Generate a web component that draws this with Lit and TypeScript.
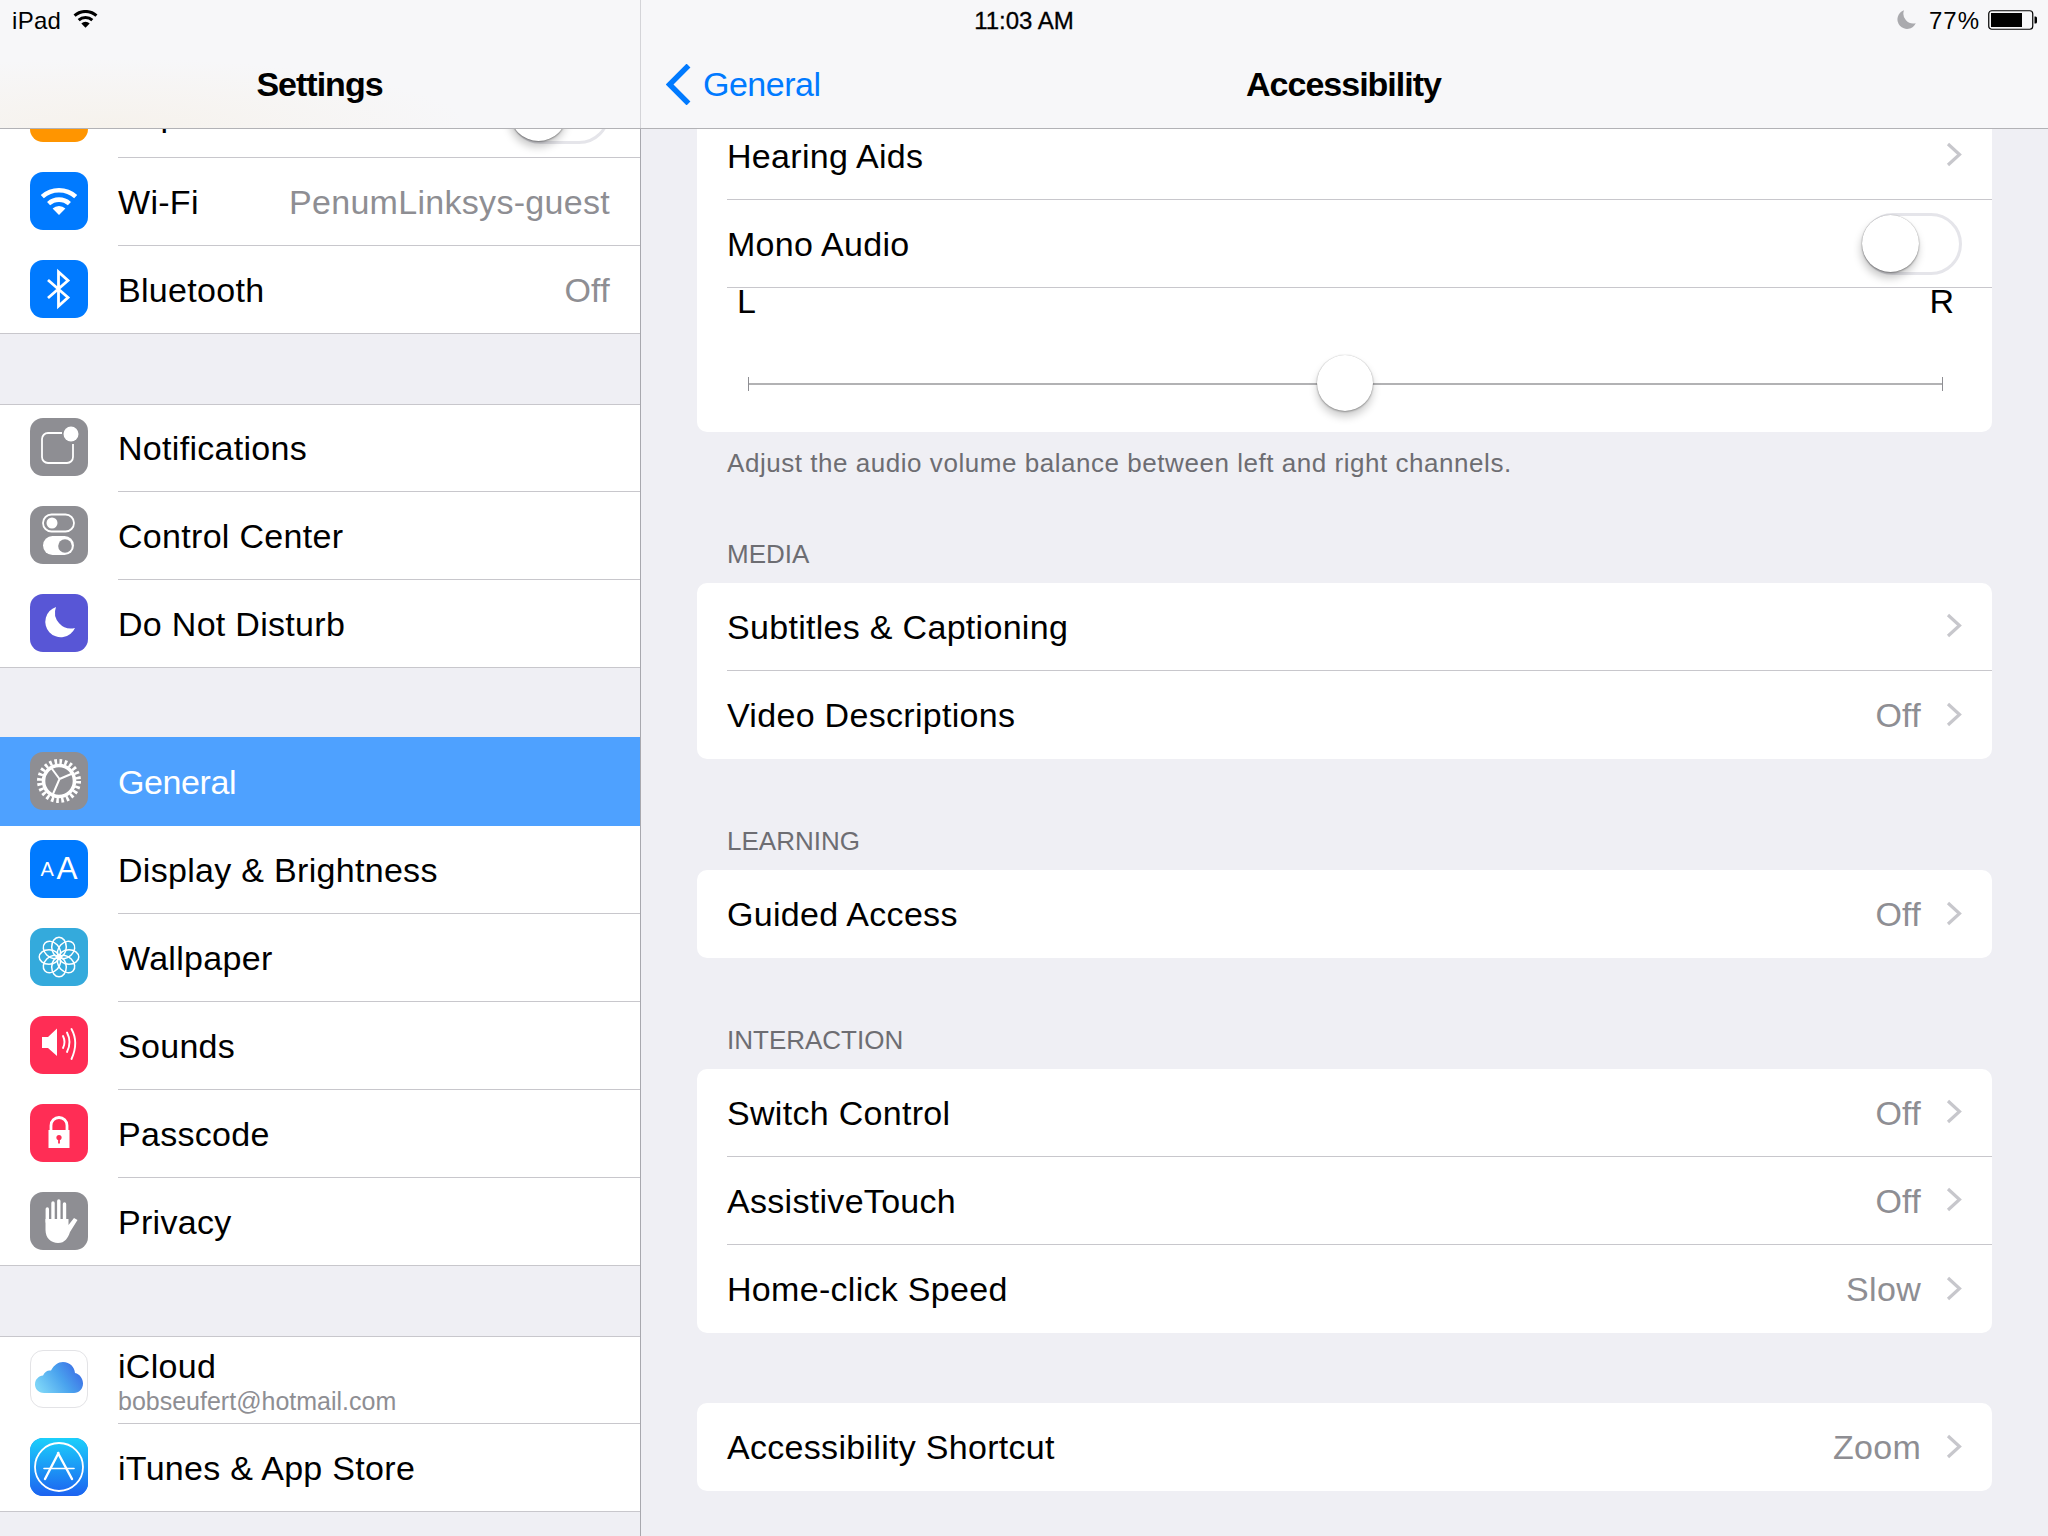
import { LitElement, html, css, svg } from "lit";
import { customElement } from "lit/decorators.js";

const W = "#fff";
const wifi = (c: string) =>
  svg`<g fill="none" stroke="${c}" stroke-width="4.6"><path d="M12.3 24.6A25 25 0 0 1 45.7 24.6"/><path d="M18.6 31.6A15.5 15.5 0 0 1 39.4 31.6"/></g><path fill="${c}" d="M29 43L22.6 36.6A9 9 0 0 1 35.4 36.6Z"/>`;
const moon = (c: string) => svg`<path fill="${c}" d="M26 13A15.5 15.5 0 1 0 45 34A16 16 0 0 1 26 13Z"/>`;

const icons: Record<string, any> = {
  plane: svg``,
  wifi: wifi(W),
  bt: svg`<path fill="none" stroke="${W}" stroke-width="2.8" d="M18 20L38 37.5L28.5 46V12L38 20.5L18 38"/>`,
  notif: svg`<path fill="none" stroke="${W}" stroke-width="1.8" d="M32 15H18a6 6 0 0 0-6 6V39a6 6 0 0 0 6 6H37a6 6 0 0 0 6-6V26"/><circle cx="41" cy="16" r="7.5" fill="${W}"/>`,
  cc: svg`<rect x="13" y="8.5" width="31" height="17" rx="8.5" fill="none" stroke="${W}" stroke-width="1.8"/><circle cx="22" cy="17" r="5.5" fill="${W}"/><rect x="13" y="30" width="31" height="19" rx="9.5" fill="${W}"/><circle cx="35" cy="40" r="6.8" fill="#8e8e93"/>`,
  moon: moon(W),
  gear: svg`<g fill="none" stroke="${W}"><circle cx="29" cy="29" r="19.5" stroke-width="5" stroke-dasharray="2.6 2.5"/><circle cx="29" cy="29" r="15.5" stroke-width="3.6"/><path stroke-width="2" d="M29.5 27L21 15.5M29.5 27L43.5 21M29.5 27L23 42"/></g>`,
  aa: svg`<g fill="${W}" font-family="Liberation Sans, Arial, sans-serif"><text x="10.5" y="36" font-size="20">A</text><text x="26.5" y="39" font-size="31.5">A</text></g>`,
  flower: svg`<g fill="none" stroke="${W}" stroke-width="1.5">${[0, 45, 90, 135, 180, 225, 270, 315].map(
    (a) => svg`<ellipse cx="29" cy="19" rx="7.3" ry="9.8" transform="rotate(${a} 29 29)"/>`
  )}</g><circle cx="29" cy="29" r="3" fill="${W}"/>`,
  sound: svg`<path fill="${W}" d="M12 21H18L27 12.5V40L18 32H12Z"/><g fill="none" stroke="${W}" stroke-width="1.9" stroke-linecap="round"><path d="M33 20Q36 26 33 32"/><path d="M37 16.5Q42 26 37 36"/><path d="M41.5 13Q49 26.5 41.5 43"/></g>`,
  lock: svg`<path fill="none" stroke="${W}" stroke-width="2.8" d="M21 27V21.5a8 8 0 0 1 16 0V27"/><rect x="18.5" y="26" width="21" height="18" fill="${W}"/><circle cx="29" cy="33.5" r="2.6" fill="#ff2d55"/><rect x="28.1" y="33.5" width="1.8" height="6" fill="#ff2d55"/>`,
  hand: svg`<path fill="${W}" d="M15.5 27V38C15.5 46 21 51 28 51C35 51 38 46 40 40L47.5 28L44 26L38.5 33V27Z"/><g stroke="${W}" stroke-width="3.4" stroke-linecap="round"><path d="M17.3 17V30M23 11V30M28.8 9V30M34.5 12V32"/></g>`,
  cloud: svg`<defs><linearGradient id="cl" x1="0.05" y1="0.75" x2="0.95" y2="0.35"><stop offset="0" stop-color="#7bd3f7"/><stop offset="0.55" stop-color="#4aa3ee"/><stop offset="1" stop-color="#3d72e6"/></linearGradient></defs><path fill="url(#cl)" d="M14 43C8 43 5 38.5 5 34.5C5 29 9 26 13 25.5C15 21 18 20 21 20.5C24 15 28 12 33 12C40 12 44.5 17 45 23C50 24 53 29 53 33.5C53 39 49 43 44 43Z"/>`,
  store: svg`<defs><linearGradient id="st" x1="0" y1="0" x2="0" y2="1"><stop offset="0" stop-color="#1bd0fb"/><stop offset="1" stop-color="#1d62f0"/></linearGradient></defs><rect width="58" height="58" fill="url(#st)"/><circle cx="29" cy="29" r="24" fill="none" stroke="${W}" stroke-width="1.8"/><g fill="none" stroke="${W}" stroke-linecap="round"><path stroke-width="2.4" d="M15 41L28.5 15M42 41L28 15"/><path stroke-width="1.6" d="M14 30.5H44"/></g>`,
};

type Item = { label: string; icon: string; bg: string; value?: string; sub?: string; sel?: boolean; toggle?: boolean };

const groups: Item[][] = [
  [
    { label: "Airplane Mode", icon: "plane", bg: "#ff9500", toggle: true },
    { label: "Wi-Fi", icon: "wifi", bg: "#007aff", value: "PenumLinksys-guest" },
    { label: "Bluetooth", icon: "bt", bg: "#007aff", value: "Off" },
  ],
  [
    { label: "Notifications", icon: "notif", bg: "#8e8e93" },
    { label: "Control Center", icon: "cc", bg: "#8e8e93" },
    { label: "Do Not Disturb", icon: "moon", bg: "#5856d6" },
  ],
  [
    { label: "General", icon: "gear", bg: "#8e8e93", sel: true },
    { label: "Display & Brightness", icon: "aa", bg: "#007aff" },
    { label: "Wallpaper", icon: "flower", bg: "#34aadc" },
    { label: "Sounds", icon: "sound", bg: "#ff2d55" },
    { label: "Passcode", icon: "lock", bg: "#ff2d55" },
    { label: "Privacy", icon: "hand", bg: "#8e8e93" },
  ],
  [
    { label: "iCloud", icon: "cloud", bg: "#fff", sub: "bobseufert@hotmail.com" },
    { label: "iTunes & App Store", icon: "store", bg: "#1d8cf5" },
  ],
];

type Sec = { head?: string; rows: { label: string; value?: string }[] };
const sections: Sec[] = [
  { head: "MEDIA", rows: [{ label: "Subtitles & Captioning" }, { label: "Video Descriptions", value: "Off" }] },
  { head: "LEARNING", rows: [{ label: "Guided Access", value: "Off" }] },
  {
    head: "INTERACTION",
    rows: [
      { label: "Switch Control", value: "Off" },
      { label: "AssistiveTouch", value: "Off" },
      { label: "Home-click Speed", value: "Slow" },
    ],
  },
  { rows: [{ label: "Accessibility Shortcut", value: "Zoom" }] },
];

@customElement("app-root")
export class AppRoot extends LitElement {
  static styles = css`
    :host {
      display: block;
      width: 2048px;
      height: 1536px;
      overflow: hidden;
      font-family: "Liberation Sans", Arial, sans-serif;
      font-size: 34px;
      color: #000;
      background: #efeff4;
    }
    .app { display: flex; flex-direction: column; height: 1536px; }
    .header {
      position: relative;
      z-index: 2;
      flex: none;
      height: 129px;
      box-sizing: border-box;
      border-bottom: 1px solid #b2b2b6;
      background:
        linear-gradient(#d4d4d8, #d4d4d8) 640px 0 / 1px 100% no-repeat,
        radial-gradient(360px 70px at 110px 128px, #f6f2ec, rgba(246, 242, 236, 0)),
        #f7f7f9;
    }
    .status {
      display: grid;
      grid-template-columns: 1fr auto 1fr;
      align-items: center;
      height: 40px;
      box-sizing: border-box;
      padding-top: 1px;
      font-size: 24px;
    }
    .st-l { display: flex; align-items: center; gap: 12px; padding-left: 12px; letter-spacing: 0.3px; }
    .st-r { display: flex; align-items: center; justify-content: flex-end; gap: 8px; padding-right: 10px; }
    .time { -webkit-text-stroke: 0.3px #000; }
    .pct { letter-spacing: 1px; margin-left: 4px; }
    .st-wifi { width: 25px; height: 19px; display: block; margin-top: -2px; }
    .st-moon { width: 21px; height: 21px; display: block; margin-top: -2px; }
    .batt { width: 50px; height: 20px; display: block; margin-top: -1px; }
    .nav { display: grid; grid-template-columns: 641px 1fr; height: 88px; }
    .title { font-weight: 700; letter-spacing: -1px; text-align: center; line-height: 88px; padding-right: 2px; }
    .nav-r { display: grid; grid-template-columns: 1fr auto 1fr; align-items: center; height: 88px; }
    .back { display: flex; align-items: center; gap: 12px; padding-left: 25px; color: #007aff; letter-spacing: -0.5px; }
    .back svg { width: 25px; height: 41px; display: block; }
    .main { flex: 1; display: grid; grid-template-columns: 641px 1fr; min-height: 0; }
    .side { overflow: hidden; border-right: 1px solid #a8a8ae; box-sizing: border-box; letter-spacing: 0.3px; }
    .side-list { margin-top: -59px; display: flex; flex-direction: column; gap: 70px; }
    .group { box-shadow: inset 0 1px 0 #c8c7cc; }
    .row {
      display: flex;
      height: 88px;
      box-sizing: border-box;
      background: #fff;
    }
    .group .row:first-child { box-shadow: inset 0 1px 0 #c8c7cc; }
    .group.first .row:first-child { box-shadow: none; }
    .row:last-child { border-bottom: 1px solid #c8c7cc; }
    .row.sel {
      background: #4ea1ff;
      color: #fff;
      letter-spacing: -0.4px;
      box-shadow: 0 -1px 0 #4ea1ff !important;
    }
    .row.sel .body { border-bottom-color: transparent; }
    .icon {
      flex: none;
      width: 58px;
      height: 58px;
      margin: 14px 0 0 30px;
      border-radius: 13px;
      overflow: hidden;
    }
    .icon svg { display: block; width: 58px; height: 58px; }
    .icon.cloud { box-sizing: border-box; border: 1px solid #e3e3e6; }
    .icon.cloud svg { margin: -1px; }
    .body {
      flex: 1;
      min-width: 0;
      margin-left: 30px;
      padding-right: 30px;
      display: flex;
      align-items: center;
      justify-content: space-between;
      box-sizing: border-box;
      height: 88px;
      border-bottom: 1px solid #c8c7cc;
    }
    .row:last-child .body { border-bottom: none; height: 87px; }
    .t { padding-top: 2px; }
    .value { color: #8e8e93; }
    .stack { display: flex; flex-direction: column; align-self: flex-start; padding-top: 11px; }
    .stack .l1 { line-height: 40px; margin-top: -1px; }
    .stack .l2 { font-size: 25px; line-height: 31px; letter-spacing: 0; color: #8e8e93; }
    .switch {
      position: relative;
      flex: none;
      width: 100px;
      height: 62px;
      box-sizing: border-box;
      border: 3px solid #e5e5ea;
      border-radius: 31px;
      background: #fff;
    }
    .switch.inset { margin-right: 0; margin-top: -2px; }
    .knob {
      position: absolute;
      left: -3px;
      top: -1px;
      width: 57px;
      height: 57px;
      border-radius: 50%;
      background: #fff;
      box-shadow: -1px 6px 9px rgba(0, 0, 0, 0.22), 0 1px 2px rgba(0, 0, 0, 0.35), 0 0 1px rgba(0, 0, 0, 0.3);
    }
    .pane { overflow: hidden; padding: 0 56px 0 56px; letter-spacing: 0.3px; }
    .card { background: #fff; border-radius: 10px; overflow: hidden; }
    .card.top { margin-top: -17px; border-radius: 0 0 10px 10px; overflow: visible; }
    .rrow {
      display: flex;
      align-items: center;
      justify-content: space-between;
      height: 88px;
      box-sizing: border-box;
      margin-left: 30px;
      padding-right: 30px;
      border-bottom: 1px solid #c8c7cc;
    }
    .card > .rrow:last-child { border-bottom: none; }
    .card > .rrow:last-child .t { padding-top: 0; }
    .rval { display: flex; align-items: center; gap: 25px; }
    .chev { width: 16px; height: 25px; display: block; margin-top: -2px; }
    .balance { height: 144px; box-sizing: border-box; letter-spacing: 0; }
    .lr {
      display: flex;
      justify-content: space-between;
      line-height: 26px;
      padding: 0 38px 0 40px;
    }
    .slider {
      position: relative;
      height: 14px;
      margin: 63px 49px 0 51px;
      border-left: 1px solid #8e8e93;
      border-right: 1px solid #8e8e93;
    }
    .slider::before {
      content: "";
      position: absolute;
      left: 0;
      right: 0;
      top: 6px;
      height: 2px;
      background: #b2b2b4;
    }
    .thumb {
      position: absolute;
      left: 50%;
      top: -22px;
      width: 56px;
      height: 56px;
      margin-left: -29px;
      border-radius: 50%;
      background: #fff;
      box-shadow: 0 6px 9px rgba(0, 0, 0, 0.2), 0 1px 2px rgba(0, 0, 0, 0.3), 0 0 1px rgba(0, 0, 0, 0.25);
    }
    .foot { padding: 16px 30px 0; font-size: 26px; line-height: 30px; letter-spacing: 0.54px; color: #6d6d72; }
    .sech { padding: 67px 30px 14px; font-size: 26px; line-height: 30px; letter-spacing: 0; color: #6d6d72; }
    .sech.after { padding-top: 61px; }
    .gap { height: 70px; }
  `;

  private chev() {
    return html`<svg class="chev" viewBox="0 0 16 25"><path fill="none" stroke="#c7c7cc" stroke-width="3.2" d="M2 2L13.5 12.5L2 23"/></svg>`;
  }

  private sideRow(it: Item) {
    return html`<div class="row ${it.sel ? "sel" : ""}">
      <div class="icon ${it.icon === "cloud" ? "cloud" : ""}" style="background:${it.bg}">
        <svg viewBox="0 0 58 58">${icons[it.icon]}</svg>
      </div>
      <div class="body">
        ${it.sub
          ? html`<div class="stack"><span class="l1">${it.label}</span><span class="l2">${it.sub}</span></div>`
          : html`<span class="t">${it.label}</span>`}
        ${it.value ? html`<span class="t value">${it.value}</span>` : ""}
        ${it.toggle ? html`<div class="switch inset"><div class="knob"></div></div>` : ""}
      </div>
    </div>`;
  }

  private detailRow(r: { label: string; value?: string }) {
    return html`<div class="rrow">
      <span class="t">${r.label}</span>
      <div class="rval">${r.value ? html`<span class="t value">${r.value}</span>` : ""}${this.chev()}</div>
    </div>`;
  }

  render() {
    return html`<div class="app">
      <header class="header">
        <div class="status">
          <div class="st-l">
            <span>iPad</span>
            <svg class="st-wifi" viewBox="10 16 38 29">${wifi("#000")}</svg>
          </div>
          <span class="time">11:03 AM</span>
          <div class="st-r">
            <svg class="st-moon" viewBox="13 11 34 34">${moon("#aaaaae")}</svg>
            <span class="pct">77%</span>
            <svg class="batt" viewBox="0 0 50 20">
              <rect x="0.75" y="0.75" width="44" height="18.5" rx="3" fill="none" stroke="#000" stroke-width="1.2"/>
              <rect x="3" y="3" width="31" height="14" fill="#000"/>
              <path d="M46.5 6.5h1a1.5 1.5 0 0 1 1.5 1.5v4a1.5 1.5 0 0 1-1.5 1.5h-1z" fill="#000"/>
            </svg>
          </div>
        </div>
        <div class="nav">
          <div class="title">Settings</div>
          <div class="nav-r">
            <div class="back">
              <svg viewBox="0 0 25 41"><path fill="none" stroke="#007aff" stroke-width="5.4" d="M22.5 1.5L3.6 20.5L22.5 39.5"/></svg>
              <span>General</span>
            </div>
            <div class="title">Accessibility</div>
            <div></div>
          </div>
        </div>
      </header>
      <div class="main">
        <aside class="side">
          <div class="side-list">
            ${groups.map((g, i) => html`<div class="group ${i === 0 ? "first" : ""}">${g.map((it) => this.sideRow(it))}</div>`)}
          </div>
        </aside>
        <section class="pane">
          <div class="card top">
            <div class="rrow"><span class="t">Hearing Aids</span><div class="rval">${this.chev()}</div></div>
            <div class="rrow"><span class="t">Mono Audio</span><div class="switch"><div class="knob"></div></div></div>
            <div class="balance">
              <div class="lr"><span>L</span><span>R</span></div>
              <div class="slider"><div class="thumb"></div></div>
            </div>
          </div>
          <div class="foot">Adjust the audio volume balance between left and right channels.</div>
          ${sections.map(
            (s, i) => html`${s.head
                ? html`<div class="sech ${i === 0 ? "after" : ""}">${s.head}</div>`
                : html`<div class="gap"></div>`}
              <div class="card">${s.rows.map((r) => this.detailRow(r))}</div>`
          )}
        </section>
      </div>
    </div>`;
  }
}
